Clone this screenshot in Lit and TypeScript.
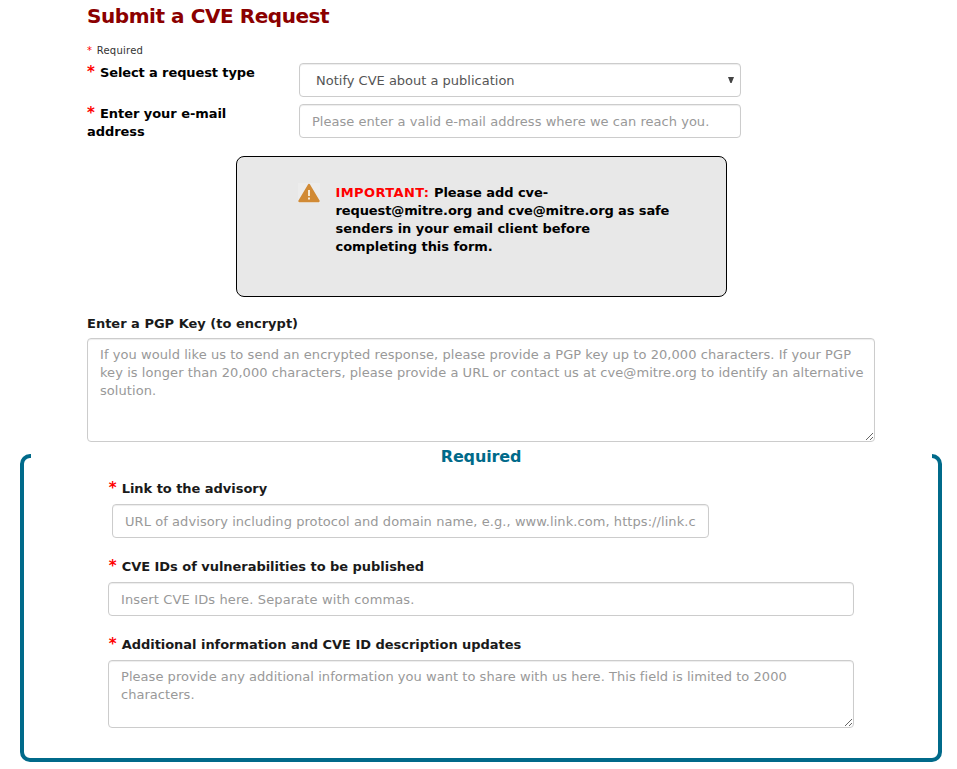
import { LitElement, html, css } from "lit";
import { customElement } from "lit/decorators.js";

@customElement("app-root")
export class AppRoot extends LitElement {
  static styles = css`
    :host {
      display: block;
      height: 769px;
      overflow: hidden;
      background: #fff;
      color: #000;
      font: 13px/18px Verdana, "DejaVu Sans", sans-serif;
    }
    * { box-sizing: border-box; }
    .content { width: 788px; margin-left: 87px; }
    h1 {
      margin: 0;
      font-size: 20px;
      line-height: 32px;
      letter-spacing: -0.44px;
      color: #8b0000;
    }
    .note {
      margin: 12px 0 5px;
      font-size: 10px;
      line-height: 14px;
      letter-spacing: 0.25px;
      color: #333;
    }
    .note .star { margin-right: 1px; }
    .star { color: #f00; }
    .pair {
      display: grid;
      grid-template-columns: 212px 442px;
      row-gap: 7px;
      align-items: start;
    }
    label { display: block; padding-top: 1px; font-weight: bold; }
    .pair label { width: 170px; height: 34px; letter-spacing: -0.05px; }
    .pair .type { letter-spacing: -0.11px; }
    label .star {
      display: inline-block;
      width: 8.5px;
      font-size: 15px;
      line-height: 0;
    }
    .dark { color: #1a1a1a; }
    .control {
      display: block;
      width: 100%;
      height: 34px;
      margin: 0;
      padding: 6px 12px;
      font: inherit;
      color: #555;
      background: #fff;
      border: 1px solid #ccc;
      border-radius: 4px;
      box-shadow: inset 0 1px 1px rgba(0, 0, 0, 0.075);
      outline: none;
    }
    .control::placeholder { color: #999; opacity: 1; }
    .picker { position: relative; }
    select.control { appearance: none; padding: 8px 12px 6px 16px; }
    .mail { letter-spacing: 0.035px; }
    .arrow {
      position: absolute;
      right: 7px;
      top: 14px;
      width: 6px;
      height: 6px;
    }
    .alert {
      display: flex;
      width: 491px;
      height: 141px;
      margin: 18px 0 17px 149px;
      padding: 26px 0 0 61px;
      border: 1px solid #000;
      border-radius: 8px;
      background: #e8e8e8;
      font-weight: bold;
      letter-spacing: -0.05px;
    }
    .alert svg { width: 22px; height: 20px; margin-right: 15.5px; flex: none; }
    .alert .text { padding-top: 1px; }
    .alert .star { letter-spacing: 0.4px; }
    .tight { letter-spacing: -0.11px; }
    .pgp { height: 104px; margin-top: 5px; padding: 7px 4px 6px 12px; resize: both; letter-spacing: 0.06px; }
    fieldset {
      width: 922px;
      height: 318px;
      margin: 2px 0 0 20px;
      padding: 11px 84px 0;
      border: 4px solid #006a8a;
      border-radius: 10px;
    }
    legend {
      width: 901px;
      height: 24px;
      margin: 0 -77.5px;
      padding: 1px 0 0;
      line-height: 24px;
      font-size: 16px;
      font-weight: bold;
      letter-spacing: -0.15px;
      text-align: center;
      color: #006a8a;
    }
    .field { width: 746px; margin-bottom: 19px; }
    .field label { letter-spacing: -0.04px; }
    .field .star { margin-left: 0.7px; }
    .field .control { margin-top: 6px; }
    .field .url { width: 597px; margin-left: 4px; letter-spacing: 0.07px; }
    .field .ids { letter-spacing: 0.13px; }
    .field .info { height: 68px; padding-top: 7px; resize: both; letter-spacing: 0.04px; }
  `;

  render() {
    const star = html`<span class="star">*</span>`;
    return html`
      <div class="content">
        <h1>Submit a CVE Request</h1>
        <div class="note">${star} Required</div>
        <div class="pair">
          <label class="type" for="type">${star} Select a request type</label>
          <div class="picker">
            <select id="type" class="control">
              <option>Notify CVE about a publication</option>
            </select>
            <svg class="arrow" viewBox="0 0 6 6"><path d="M0 0H6L3.6 6H2.4Z" fill="#444" /></svg>
          </div>
          <label for="mail">${star} Enter your e-mail<br />address</label>
          <input id="mail" class="control mail" placeholder="Please enter a valid e-mail address where we can reach you." />
        </div>
        <div class="alert">
          <svg viewBox="0 0 22 20">
            <rect width="22" height="20" fill="#ececec" />
            <path d="M11 2L20.5 18H1.5Z" fill="#d18a35" stroke="#d18a35" stroke-width="2.4" stroke-linejoin="round" />
            <path d="M10 7h2v6h-2zM10 14.5h2v2h-2z" fill="#f7ead5" />
          </svg>
          <div class="text">
            <span class="star">IMPORTANT:</span> Please add cve-<br /><span class="tight">request@mitre.org and cve@mitre.org as safe</span><br />senders in your email client before<br />completing this form.
          </div>
        </div>
        <label class="dark" for="pgp">Enter a PGP Key (to encrypt)</label>
        <textarea id="pgp" class="control pgp" placeholder=${"If you would like us to send an encrypted response, please provide a PGP key up to 20,000 characters. If your PGP\nkey is longer than 20,000 characters, please provide a URL or contact us at cve@mitre.org to identify an alternative\nsolution."}></textarea>
      </div>
      <fieldset>
        <legend>Required</legend>
        <div class="field">
          <label class="dark" for="url">${star} Link to the advisory</label>
          <input id="url" class="control url" placeholder="URL of advisory including protocol and domain name, e.g., www.link.com, https://link.com" />
        </div>
        <div class="field">
          <label class="dark" for="ids">${star} CVE IDs of vulnerabilities to be published</label>
          <input id="ids" class="control ids" placeholder="Insert CVE IDs here. Separate with commas." />
        </div>
        <div class="field">
          <label class="dark" for="info">${star} Additional information and CVE ID description updates</label>
          <textarea id="info" class="control info" placeholder=${"Please provide any additional information you want to share with us here. This field is limited to 2000\ncharacters."}></textarea>
        </div>
      </fieldset>
    `;
  }
}
